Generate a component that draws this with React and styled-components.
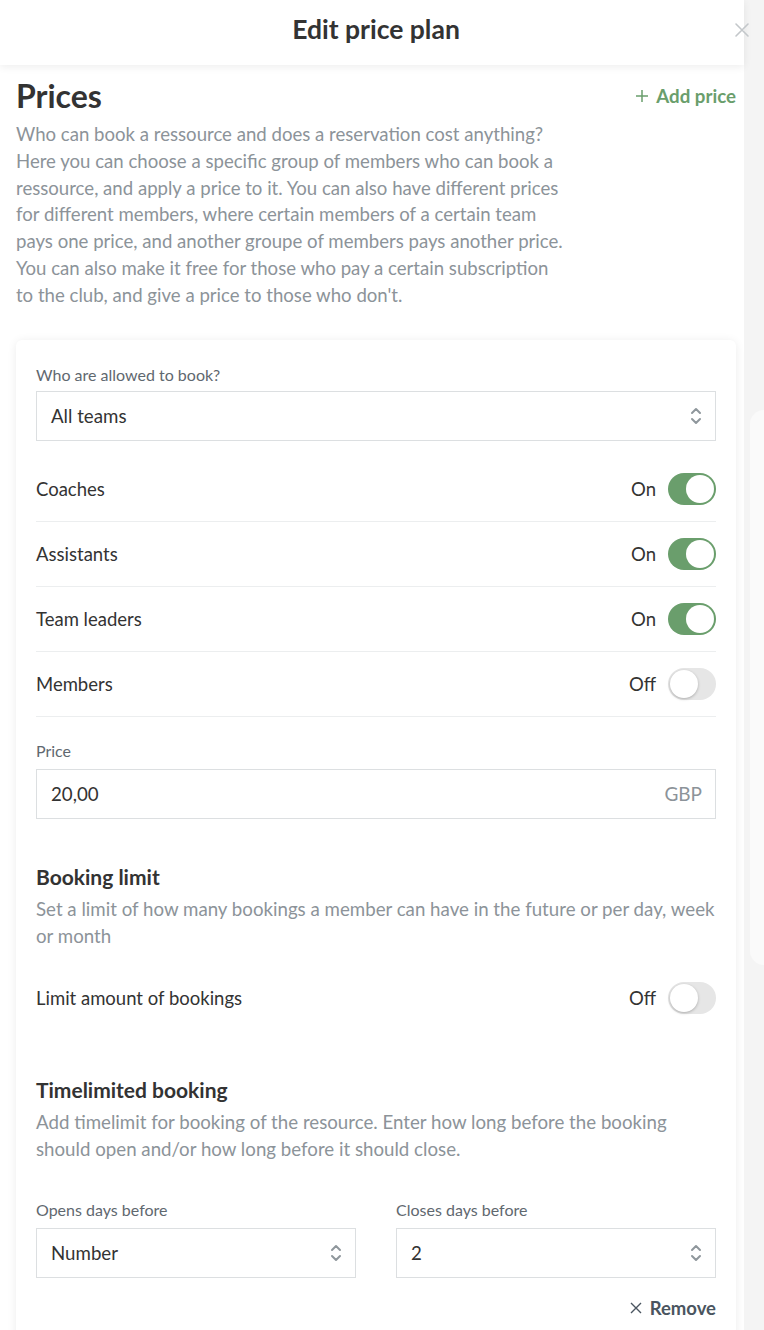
import React from "react";
import styled, { createGlobalStyle } from "styled-components";

const Global = createGlobalStyle`
  html, body { margin: 0; padding: 0; }
  body {
    font-family: Lato, "Open Sans", Arial, sans-serif;
    background: #f4f4f4;
    color: #333;
    -webkit-font-smoothing: antialiased;
  }
  * { box-sizing: border-box; }
`;

const Page = styled.div`
  display: flex;
  width: 764px;
  min-height: 1330px;
  overflow: hidden;
`;

const Modal = styled.div`
  width: 744px;
  flex: none;
  background: #fff;
  min-height: 1330px;
`;

const Gutter = styled.div`
  flex: 1;
  background: #f4f4f4;
  padding: 410px 0 0 6px;
`;

const GhostCard = styled.div`
  height: 555px;
  background: #fafafa;
  border-radius: 14px 0 0 14px;
`;

const Header = styled.header`
  position: relative;
  height: 65px;
  display: flex;
  align-items: center;
  justify-content: center;
  padding: 0 0 8px 8px;
  box-shadow: 0 2px 8px rgba(0, 0, 0, 0.07);
  z-index: 1;
`;

const Title = styled.h1`
  margin: 0;
  font-size: 26.5px;
  line-height: 32px;
  font-weight: 700;
  color: #333;
`;

const Close = styled.button`
  position: absolute;
  left: 733px;
  top: 21px;
  width: 18px;
  height: 18px;
  padding: 0;
  border: none;
  background: none;
  display: flex;
  align-items: center;
  justify-content: center;
`;

const Content = styled.div`
  padding: 13px 8px 0 16px;
`;

const TitleRow = styled.div`
  display: flex;
  justify-content: space-between;
  align-items: center;
`;

const H2 = styled.h2`
  margin: 0;
  font-size: 32px;
  line-height: 36px;
  font-weight: 700;
  color: #333;
`;

const AddLink = styled.a`
  display: flex;
  align-items: center;
  gap: 8px;
  color: #6a9e6c;
  font-weight: 700;
  font-size: 18.7px;
  text-decoration: none;
`;

const Intro = styled.p`
  margin: 7px 0 0;
  width: 550px;
  font-size: 18.6px;
  line-height: 26.8px;
  color: #8c9399;
`;

const Card = styled.section`
  margin-top: 31px;
  width: 720px;
  background: #fff;
  border-radius: 6px;
  box-shadow: 0 1px 10px rgba(0, 0, 0, 0.08);
  padding: 25px 20px 40px;
`;

const Label = styled.div`
  font-size: 16px;
  line-height: 20px;
  color: #5f686f;
  margin-bottom: 6px;
`;

const Field = styled.div`
  height: 50px;
  border: 1px solid #dcdfe1;
  display: flex;
  align-items: center;
  justify-content: space-between;
  padding: 0 13px 0 14px;
  font-size: 18.7px;
  color: #333;
`;

const Suffix = styled.span`
  color: #8c9399;
  font-size: 19px;
`;

const Rows = styled.div`
  margin-top: 16px;
`;

const Row = styled.div`
  height: 65px;
  display: flex;
  align-items: center;
  justify-content: space-between;
  border-bottom: ${(p) => (p.$last ? "none" : "1px solid #eceeef")};
  font-size: 18.5px;
  color: #333;
`;

const ToggleWrap = styled.div`
  display: flex;
  align-items: center;
  gap: 12px;
`;

const Track = styled.span`
  position: relative;
  width: 48px;
  height: 32px;
  border-radius: 16px;
  background: ${(p) => (p.$on ? "#6a9e6c" : "#e6e6e6")};
  display: inline-block;
`;

const Knob = styled.span`
  position: absolute;
  top: 2px;
  left: ${(p) => (p.$on ? "18px" : "2px")};
  width: 28px;
  height: 28px;
  border-radius: 50%;
  background: #fff;
  box-shadow: ${(p) => (p.$on ? "none" : "0 1px 3px rgba(0,0,0,0.25)")};
`;

const Group = styled.div`
  margin-top: ${(p) => p.$mt || 0}px;
`;

const H3 = styled.h3`
  margin: 0;
  font-size: 21px;
  line-height: 26px;
  font-weight: 700;
  color: #333;
`;

const Desc = styled.p`
  margin: 6px 0 0;
  font-size: 18.7px;
  line-height: 27px;
  color: #8c9399;
`;

const Cols = styled.div`
  display: grid;
  grid-template-columns: 1fr 1fr;
  gap: 40px;
`;

const FieldLabel = styled(Label)`
  margin-bottom: 8px;
`;

const RemoveRow = styled.div`
  display: flex;
  justify-content: flex-end;
  margin-top: 19px;
`;

const Remove = styled.a`
  display: flex;
  align-items: center;
  gap: 8px;
  color: #4a5560;
  font-weight: 700;
  font-size: 18.5px;
  text-decoration: none;
`;

const Chevrons = () => (
  <svg width="12" height="20" viewBox="0 0 12 20" fill="none" stroke="#8f979c" strokeWidth="2" strokeLinecap="round" strokeLinejoin="round">
    <path d="M2 7l4-4 4 4" />
    <path d="M2 13l4 4 4-4" />
  </svg>
);

const Toggle = ({ on }) => (
  <ToggleWrap>
    <span>{on ? "On" : "Off"}</span>
    <Track $on={on}>
      <Knob $on={on} />
    </Track>
  </ToggleWrap>
);

const roles = [
  ["Coaches", true],
  ["Assistants", true],
  ["Team leaders", true],
  ["Members", false],
];

export default function App() {
  return (
    <>
      <Global />
      <Page>
        <Modal>
          <Header>
            <Title>Edit price plan</Title>
            <Close aria-label="Close">
              <svg width="16" height="16" viewBox="0 0 16 16" stroke="#c3c7ca" strokeWidth="1.6" strokeLinecap="round">
                <path d="M2 2l12 12M14 2L2 14" />
              </svg>
            </Close>
          </Header>
          <Content>
            <TitleRow>
              <H2>Prices</H2>
              <AddLink href="#">
                <svg width="12" height="12" viewBox="0 0 12 12" stroke="#6a9e6c" strokeWidth="1.5">
                  <path d="M6 0v12M0 6h12" />
                </svg>
                Add price
              </AddLink>
            </TitleRow>
            <Intro>
              Who can book a ressource and does a reservation cost anything? Here you can choose a specific group of members who can book a ressource, and apply a price to it. You can also have different prices for different members, where certain members of a certain team pays one price, and another groupe of members pays another price. You can also make it free for those who pay a certain subscription to the club, and give a price to those who don't.
            </Intro>
            <Card>
              <Label>Who are allowed to book?</Label>
              <Field>
                <span>All teams</span>
                <Chevrons />
              </Field>
              <Rows>
                {roles.map(([name, on]) => (
                  <Row key={name}>
                    <span>{name}</span>
                    <Toggle on={on} />
                  </Row>
                ))}
              </Rows>
              <Group $mt={24}>
                <FieldLabel>Price</FieldLabel>
                <Field>
                  <span>20,00</span>
                  <Suffix>GBP</Suffix>
                </Field>
              </Group>
              <Group $mt={45}>
                <H3>Booking limit</H3>
                <Desc>Set a limit of how many bookings a member can have in the future or per day, week or month</Desc>
              </Group>
              <Group $mt={16}>
                <Row $last>
                  <span>Limit amount of bookings</span>
                  <Toggle on={false} />
                </Row>
              </Group>
              <Group $mt={46}>
                <H3>Timelimited booking</H3>
                <Desc>Add timelimit for booking of the resource. Enter how long before the booking should open and/or how long before it should close.</Desc>
              </Group>
              <Group $mt={37}>
                <Cols>
                  <div>
                    <FieldLabel>Opens days before</FieldLabel>
                    <Field>
                      <span>Number</span>
                      <Chevrons />
                    </Field>
                  </div>
                  <div>
                    <FieldLabel>Closes days before</FieldLabel>
                    <Field>
                      <span>2</span>
                      <Chevrons />
                    </Field>
                  </div>
                </Cols>
              </Group>
              <RemoveRow>
                <Remove href="#">
                  <svg width="12" height="12" viewBox="0 0 12 12" stroke="#4a5560" strokeWidth="1.4">
                    <path d="M1 1l10 10M11 1L1 11" />
                  </svg>
                  Remove
                </Remove>
              </RemoveRow>
            </Card>
          </Content>
        </Modal>
        <Gutter>
          <GhostCard />
        </Gutter>
      </Page>
    </>
  );
}
